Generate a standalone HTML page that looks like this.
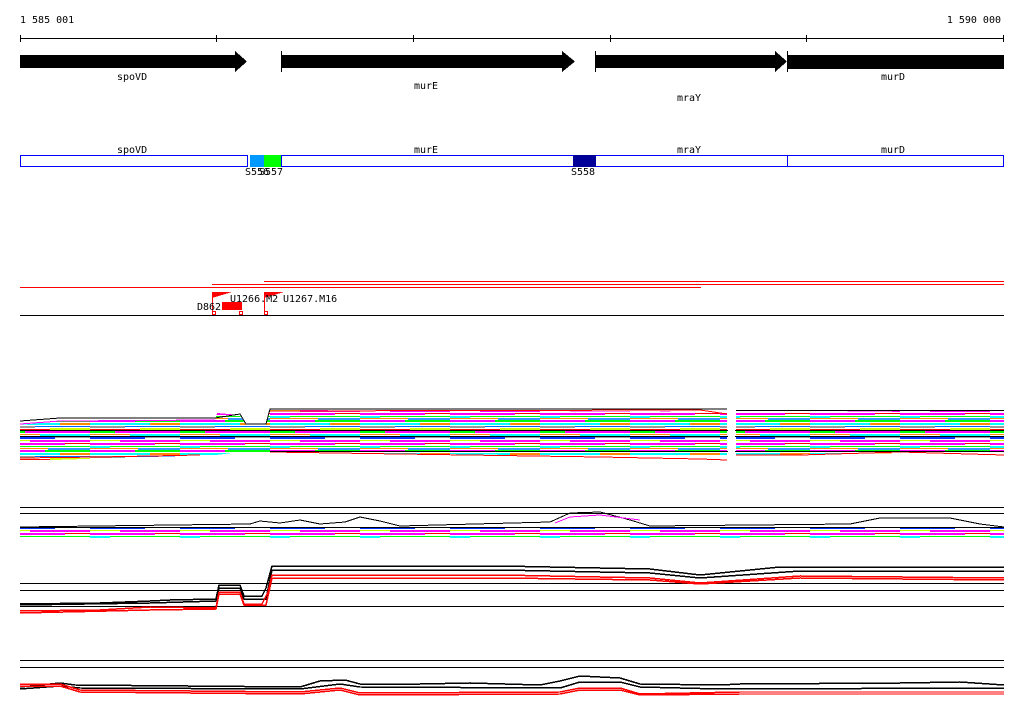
<!DOCTYPE html>
<html><head><meta charset="utf-8"><style>
html,body{margin:0;padding:0;background:#fff;width:1024px;height:714px;overflow:hidden}
svg{display:block}
text{font-family:"DejaVu Sans Mono","Liberation Mono",monospace;font-size:10px;fill:#000}
</style></head><body>
<svg width="1024" height="714" viewBox="0 0 1024 714" xmlns="http://www.w3.org/2000/svg" shape-rendering="crispEdges">
<defs>
<pattern id="cp" width="90" height="30" patternUnits="userSpaceOnUse">
<rect width="90" height="30" fill="#fff"/>
<rect x="0" y="0" width="45" height="2" fill="#ff00ff"/><rect x="45" y="0" width="45" height="2" fill="#00ff00"/>
<rect x="0" y="3" width="60" height="2" fill="#00ffff"/><rect x="60" y="3" width="30" height="2" fill="#ff8c00"/>
<rect x="0" y="6" width="35" height="2" fill="#999"/><rect x="35" y="6" width="55" height="1" fill="#0066ff"/>
<rect x="0" y="9" width="50" height="1" fill="#ff0000"/><rect x="50" y="8" width="40" height="2" fill="#ccff00"/>
<rect x="0" y="11" width="25" height="2" fill="#00ff00"/><rect x="25" y="11" width="65" height="2" fill="#ff00ff"/>
<rect x="0" y="14" width="40" height="1" fill="#ff8c00"/><rect x="40" y="14" width="50" height="2" fill="#00ffff"/>
<rect x="0" y="17" width="55" height="2" fill="#0033ff"/><rect x="55" y="17" width="35" height="1" fill="#999"/>
<rect x="0" y="20" width="30" height="1" fill="#ccff00"/><rect x="30" y="20" width="60" height="2" fill="#ff00ff"/>
<rect x="0" y="23" width="65" height="2" fill="#ff00ff"/><rect x="65" y="23" width="25" height="1" fill="#ff0000"/>
<rect x="0" y="26" width="20" height="2" fill="#00ffff"/><rect x="20" y="26" width="70" height="1" fill="#00ff00"/>
<rect x="0" y="28" width="48" height="1" fill="#ff8c00"/><rect x="48" y="28" width="42" height="2" fill="#3399ff"/>
</pattern>
</defs>
<text x="20" y="23">1 585 001</text>
<text x="1001" y="23" text-anchor="end">1 590 000</text>
<g stroke="#000" stroke-width="1">
<line x1="20" y1="38.5" x2="1004" y2="38.5"/>
<line x1="20.5" y1="35" x2="20.5" y2="42"/><line x1="216.5" y1="35" x2="216.5" y2="42"/><line x1="413.5" y1="35" x2="413.5" y2="42"/><line x1="610.5" y1="35" x2="610.5" y2="42"/><line x1="806.5" y1="35" x2="806.5" y2="42"/><line x1="1003.5" y1="35" x2="1003.5" y2="42"/>
</g>
<g fill="#000">
<polygon points="20,55 235,55 235,51 247,61.5 235,72 235,68 20,68"/>
<rect x="281" y="55" width="281" height="13"/><polygon points="562,51 575,61.5 562,72"/><rect x="281" y="51" width="1" height="21"/>
<rect x="595" y="55" width="180" height="13"/><polygon points="775,51 787,61.5 775,72"/><rect x="595" y="51" width="1" height="21"/>
<rect x="787" y="55" width="217" height="14"/><rect x="787" y="51" width="1" height="21"/>
</g>
<text x="117" y="80">spoVD</text>
<text x="414" y="89">murE</text>
<text x="677" y="101">mraY</text>
<text x="881" y="80">murD</text>
<text x="117" y="153">spoVD</text>
<text x="414" y="153">murE</text>
<text x="677" y="153">mraY</text>
<text x="881" y="153">murD</text>
<g fill="none" stroke="#0000ff" stroke-width="1">
<rect x="20.5" y="155.5" width="227" height="11"/>
<rect x="281.5" y="155.5" width="722" height="11"/>
<line x1="787.5" y1="155" x2="787.5" y2="167"/>
</g>
<rect x="250" y="155" width="14" height="12" fill="#0099ff"/>
<rect x="264" y="155" width="17" height="12" fill="#00ff00"/>
<rect x="573" y="155" width="23" height="12" fill="#000099"/>
<text x="245" y="175">S556</text><text x="259" y="175">S557</text>
<text x="571" y="175">S558</text>
<rect x="264" y="281" width="740" height="1" fill="#f00"/>
<rect x="212" y="284" width="792" height="1" fill="#f00"/>
<rect x="20" y="287" width="239" height="1" fill="#f00"/>
<rect x="259" y="287" width="442" height="1" fill="#f00"/>
<rect x="20" y="315" width="984" height="1" fill="#000"/>
<polygon points="212,292 232,292 212,298" fill="#f00"/>
<polygon points="264,292 284,292 264,298" fill="#f00"/>
<rect x="222" y="302" width="20" height="8" fill="#f00"/>
<g fill="none" stroke="#f00"><line x1="212.5" y1="292" x2="212.5" y2="315"/><line x1="264.5" y1="292" x2="264.5" y2="315"/>
<rect x="212.5" y="311.5" width="3" height="3"/><rect x="239.5" y="311.5" width="3" height="3"/><rect x="264.5" y="311.5" width="3" height="3"/></g>
<text x="230" y="302">U1266.M2</text><text x="283" y="302">U1267.M16</text><text x="197" y="310">D862</text>
<!-- band 1 -->
<polygon points="20,425 60,421 215,420 217,413 240,415 246,425 266,425 270,410 727,412 727,455 600,456 270,452 266,453 240,452 216,455 20,461" fill="url(#cp)"/>
<polygon points="736,413 1004,410 1004,452 736,455" fill="url(#cp)"/>
<polyline points="20,421 60,418 215,418 240,414 246,424 266,424 270,409 727,409" fill="none" stroke="#000"/>
<polyline points="20,424 60,421 215,420" fill="none" stroke="#f0f"/>
<polyline points="270,411 700,410 727,414" fill="none" stroke="#f00"/>
<polyline points="270,452 400,454 600,457 700,459 727,460" fill="none" stroke="#f00"/>
<polyline points="736,455 800,455 900,452 1004,455" fill="none" stroke="#f00"/>
<polyline points="20,458 100,457 200,455" fill="none" stroke="#f00"/>
<g stroke="#000"><line x1="20" y1="430.5" x2="1004" y2="430.5"/><line x1="20" y1="436.5" x2="1004" y2="436.5"/><line x1="270" y1="451.5" x2="1004" y2="451.5"/><line x1="736" y1="410.5" x2="1004" y2="410.5"/></g>
<rect x="728" y="405" width="7" height="60" fill="#fff"/>
<!-- band 2 -->
<g stroke="#000"><line x1="20" y1="507.5" x2="1004" y2="507.5"/><line x1="20" y1="513.5" x2="1004" y2="513.5"/></g>
<rect x="20" y="526" width="984" height="12" fill="url(#cp)"/>
<polyline points="20,527 250,524 260,521 280,523 300,520 320,524 345,522 360,517 380,521 400,526 550,522 570,513 600,512 630,520 650,526 850,524 880,518 950,518 980,524 1004,527" fill="none" stroke="#000"/>
<polyline points="555,523 570,517 600,515 640,520" fill="none" stroke="#f0f"/>
<line x1="20" y1="527.5" x2="1004" y2="527.5" stroke="#000"/>
<!-- band 3 -->
<g stroke="#000"><line x1="20" y1="583.5" x2="1004" y2="583.5"/><line x1="20" y1="590.5" x2="1004" y2="590.5"/><line x1="20" y1="606.5" x2="1004" y2="606.5"/></g>
<g fill="none" stroke="#000" stroke-width="1.5"><polyline points="20,604 100,603 150,601 170,600 216,599 219,585 240,585 244,596 262,596 266,588 272,566 500,566 650,569 700,575 780,567 1004,567"/>
<polyline points="20,605 150,603 216,601 219,588 240,588 244,599 266,599 272,570 500,570 650,573 700,578 800,571 1004,571"/></g>
<g fill="none" stroke="#f00" stroke-width="1.5"><polyline points="20,611 100,610 150,607 216,608 219,592 240,592 244,604 262,604 268,592 272,575 500,575 650,578 700,583 800,576 1004,578"/>
<polyline points="20,613 150,610 216,609 219,594 240,594 244,605 266,605 272,578 500,578 650,580 700,584 800,578 1004,580"/></g>
<!-- band 4 -->
<g stroke="#000"><line x1="20" y1="660.5" x2="1004" y2="660.5"/><line x1="20" y1="667.5" x2="1004" y2="667.5"/></g>
<g fill="none" stroke="#000" stroke-width="1.5"><polyline points="20,687 60,683 75,685 300,687 320,681 345,680 360,684 420,684 470,683 540,685 560,681 580,676 620,678 640,684 720,685 740,684 900,683 960,682 1004,685"/>
<polyline points="20,689 60,686 80,688 300,689 340,684 360,687 560,688 580,682 620,682 640,687 720,689 1004,688"/></g>
<g fill="none" stroke="#f00" stroke-width="1.5"><polyline points="20,684 60,684 80,690 300,692 340,688 360,693 560,692 580,688 620,688 640,694 740,692 1004,692"/>
<polyline points="20,686 60,686 80,692 300,694 340,690 360,695 560,694 580,690 620,690 640,695 740,694 1004,694"/></g>
</svg>
</body></html>
